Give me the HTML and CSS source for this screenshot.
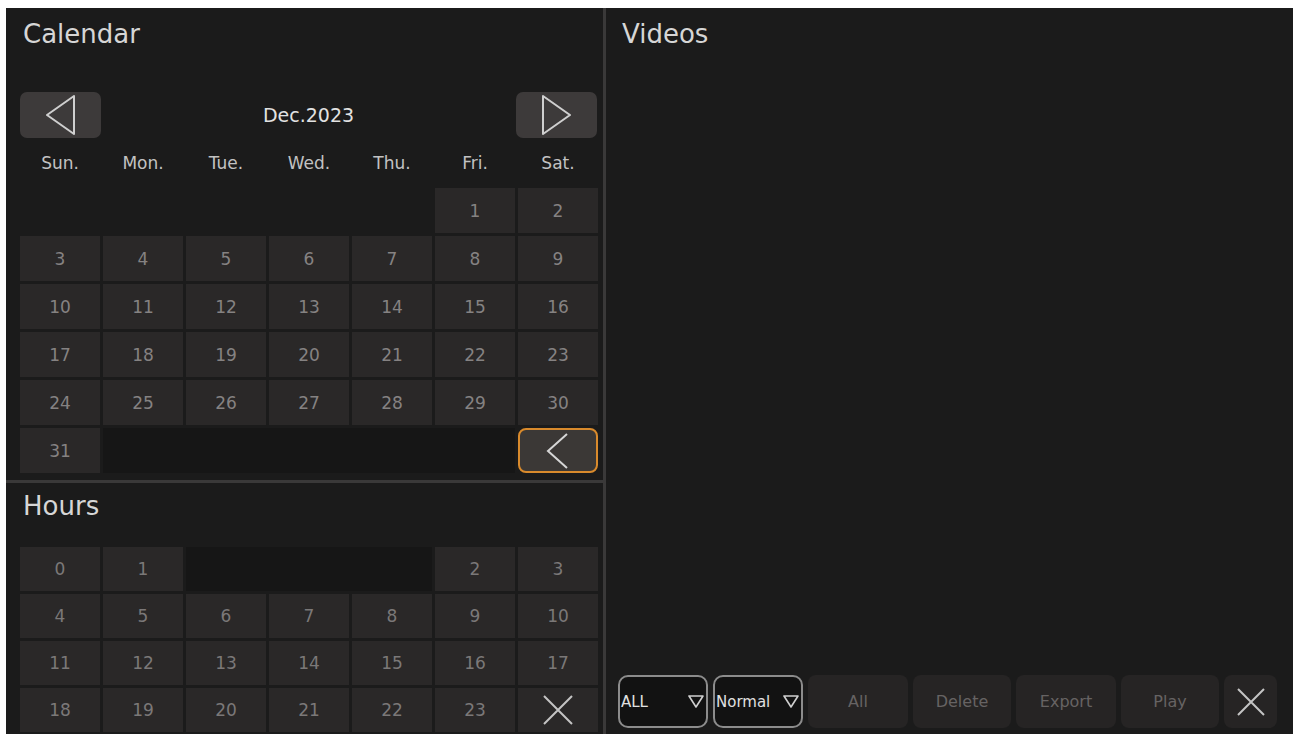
FILE: index.html
```html
<!DOCTYPE html>
<html lang="en">
<head>
<meta charset="utf-8">
<title>Playback</title>
<link rel="stylesheet" href="styles.css">
</head>
<body>
<div class="screen">
  <div class="left">
    <section class="panel calendar">
      <h2 class="title">Calendar</h2>
      <div class="month-nav">
        <button class="nav-btn" aria-label="Previous month">
          <svg width="30" height="40" viewBox="0 0 30 40"><polygon points="28,1 1,20 28,39" fill="none" stroke="#cfcfcf" stroke-width="2" stroke-linejoin="round"/></svg>
        </button>
        <span class="month">Dec.2023</span>
        <button class="nav-btn" aria-label="Next month">
          <svg width="30" height="40" viewBox="0 0 30 40"><polygon points="2,1 29,20 2,39" fill="none" stroke="#cfcfcf" stroke-width="2" stroke-linejoin="round"/></svg>
        </button>
      </div>
      <div class="grid weekdays">
        <span>Sun.</span><span>Mon.</span><span>Tue.</span><span>Wed.</span><span>Thu.</span><span>Fri.</span><span>Sat.</span>
      </div>
      <div class="grid days">
        <span class="empty span5"></span>
        <span class="cell">1</span><span class="cell">2</span>
        <span class="cell">3</span><span class="cell">4</span><span class="cell">5</span><span class="cell">6</span><span class="cell">7</span><span class="cell">8</span><span class="cell">9</span>
        <span class="cell">10</span><span class="cell">11</span><span class="cell">12</span><span class="cell">13</span><span class="cell">14</span><span class="cell">15</span><span class="cell">16</span>
        <span class="cell">17</span><span class="cell">18</span><span class="cell">19</span><span class="cell">20</span><span class="cell">21</span><span class="cell">22</span><span class="cell">23</span>
        <span class="cell">24</span><span class="cell">25</span><span class="cell">26</span><span class="cell">27</span><span class="cell">28</span><span class="cell">29</span><span class="cell">30</span>
        <span class="cell">31</span>
        <span class="empty dark span5"></span>
        <span class="cell back">
          <svg width="24" height="36" viewBox="0 0 24 36"><polyline points="21,1 2,18 21,35" fill="none" stroke="#d6d6d6" stroke-width="2"/></svg>
        </span>
      </div>
    </section>
    <section class="panel hours">
      <h2 class="title">Hours</h2>
      <div class="grid hour-grid">
        <span class="cell">0</span><span class="cell">1</span>
        <span class="empty dark span3"></span>
        <span class="cell">2</span><span class="cell">3</span>
        <span class="cell">4</span><span class="cell">5</span><span class="cell">6</span><span class="cell">7</span><span class="cell">8</span><span class="cell">9</span><span class="cell">10</span>
        <span class="cell">11</span><span class="cell">12</span><span class="cell">13</span><span class="cell">14</span><span class="cell">15</span><span class="cell">16</span><span class="cell">17</span>
        <span class="cell">18</span><span class="cell">19</span><span class="cell">20</span><span class="cell">21</span><span class="cell">22</span><span class="cell">23</span>
        <span class="cell close">
          <svg width="30" height="30" viewBox="0 0 30 30"><path d="M1 1 L29 29 M29 1 L1 29" stroke="#c4c4c4" stroke-width="2"/></svg>
        </span>
      </div>
    </section>
  </div>
  <section class="panel videos">
    <h2 class="title">Videos</h2>
    <div class="video-list"></div>
    <div class="toolbar">
      <div class="dropdown"><span>ALL</span>
        <svg width="16" height="13" viewBox="0 0 16 13"><polygon points="1,1 15,1 8,12" fill="none" stroke="#cfcfcf" stroke-width="1.6" stroke-linejoin="round"/></svg>
      </div>
      <div class="dropdown"><span>Normal</span>
        <svg width="16" height="13" viewBox="0 0 16 13"><polygon points="1,1 15,1 8,12" fill="none" stroke="#cfcfcf" stroke-width="1.6" stroke-linejoin="round"/></svg>
      </div>
      <button class="tool w-all">All</button>
      <button class="tool w-del">Delete</button>
      <button class="tool w-exp">Export</button>
      <button class="tool w-play">Play</button>
      <button class="tool w-x" aria-label="Close">
        <svg width="30" height="30" viewBox="0 0 30 30"><path d="M2 2 L28 28 M28 2 L2 28" stroke="#c4c4c4" stroke-width="2"/></svg>
      </button>
    </div>
  </section>
</div>
</body>
</html>
```

FILE: styles.css
```css
html, body {
  margin: 0;
  padding: 0;
  background: #ffffff;
}

body {
  font-family: "DejaVu Sans", "Noto Sans", sans-serif;
}

.screen {
  margin: 8px 8px 0 6px;
  width: 1287px;
  height: 726px;
  display: grid;
  grid-template-columns: 597px 687px;
  column-gap: 3px;
  background: #3a3939;
}

.left {
  display: grid;
  grid-template-rows: 472px 251px;
  row-gap: 3px;
}

.panel {
  background: #1b1b1b;
  overflow: hidden;
}

.title {
  margin: 0 0 0 3px;
  font-size: 26px;
  line-height: 30px;
  font-weight: normal;
  color: #d6d6d6;
}

.calendar {
  padding: 11px 5px 0 14px;
}

.month-nav {
  margin-top: 43px;
  height: 46px;
  margin-right: 1px;
  display: flex;
  align-items: center;
  justify-content: space-between;
}

.nav-btn {
  width: 81px;
  height: 46px;
  border: none;
  padding: 0;
  border-radius: 7px;
  background: #3d3a3a;
  display: flex;
  align-items: center;
  justify-content: center;
}

.month {
  font-size: 19px;
  color: #e2e2e2;
}

.grid {
  display: grid;
  grid-template-columns: repeat(7, 80px);
  column-gap: 3px;
}

.weekdays {
  height: 50px;
  align-items: center;
  justify-items: center;
  font-size: 17px;
  color: #c2c2c2;
}

.days {
  grid-auto-rows: 45px;
  row-gap: 3px;
}

.cell {
  background: #2a2828;
  color: #858282;
  font-size: 17px;
  display: flex;
  align-items: center;
  justify-content: center;
}

.span5 {
  grid-column: span 5;
}

.span3 {
  grid-column: span 3;
}

.empty.dark {
  background: #161616;
}

.cell.back {
  background: #3b3836;
  border: 2px solid #d98a2c;
  border-radius: 8px;
  box-sizing: border-box;
}

.hours {
  padding: 8px 5px 0 14px;
}

.hour-grid {
  margin-top: 26px;
  grid-auto-rows: 44px;
  row-gap: 3px;
}

.hour-grid .cell {
  color: #7b7878;
}

.videos {
  padding: 11px 16px 6px 12px;
  display: flex;
  flex-direction: column;
}

.videos .title {
  margin-left: 4px;
}

.video-list {
  flex: 1;
}

.toolbar {
  height: 53px;
  display: flex;
  gap: 5px;
}

.dropdown {
  width: 90px;
  box-sizing: border-box;
  border: 2px solid #8c8c8c;
  border-radius: 10px;
  background: #121212;
  display: flex;
  align-items: center;
  justify-content: space-between;
  padding: 0 2px 0 1px;
  font-size: 15px;
  color: #e0e0e0;
}

.tool {
  border: none;
  padding: 0;
  border-radius: 8px;
  background: #262424;
  color: #666363;
  font-family: "DejaVu Sans", "Noto Sans", sans-serif;
  font-size: 16px;
  display: flex;
  align-items: center;
  justify-content: center;
}

.w-all { width: 100px; }
.w-del { width: 98px; }
.w-exp { width: 100px; }
.w-play { width: 98px; }
.w-x { width: 53px; }
```
